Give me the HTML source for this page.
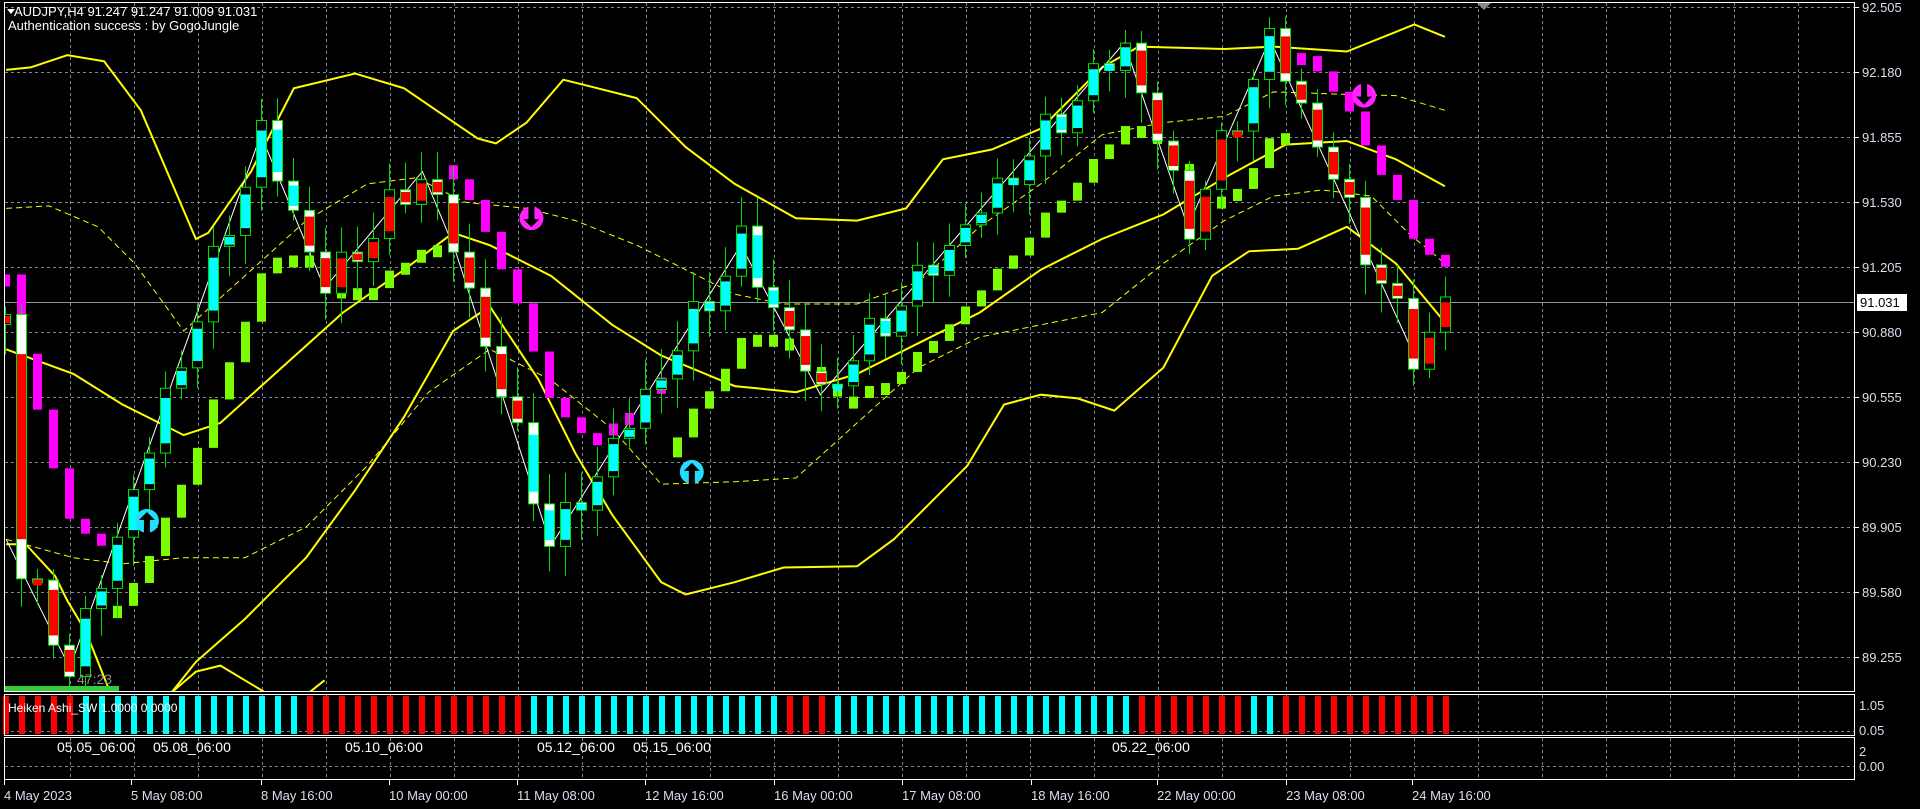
<!DOCTYPE html>
<html><head><meta charset="utf-8">
<style>
html,body{margin:0;padding:0;background:#000;overflow:hidden}
svg{display:block}
text{font-family:"Liberation Sans",sans-serif}
</style></head>
<body>
<svg id="s" width="1920" height="809" viewBox="0 0 1920 809" xmlns="http://www.w3.org/2000/svg">
<defs><clipPath id="mp"><rect x="5" y="3" width="1849" height="688"/></clipPath></defs>
<rect width="1920" height="809" fill="#000"/>
<g id="grid"></g>
<g id="bands" fill="none" clip-path="url(#mp)"></g>
<g id="cand" clip-path="url(#mp)"></g>
<g id="ind"></g>
<g id="ov"></g>
<rect x="4.5" y="2.5" width="1850" height="689" fill="none" stroke="#fff" stroke-width="1"/>
<rect x="4.5" y="694.5" width="1850" height="41" fill="none" stroke="#fff" stroke-width="1"/>
<rect x="4.5" y="737.5" width="1850" height="42" fill="none" stroke="#fff" stroke-width="1"/>
<g id="lbl" fill="#dde" font-size="13"></g>
<text x="14" y="16" fill="#fff" font-size="13">AUDJPY,H4  91.247 91.247 91.009 91.031</text>
<polygon points="7,9 15,9 11,14" fill="#fff"/>
<text x="8" y="30" fill="#fff" font-size="13">Authentication success : by GogoJungle</text>
<polygon points="1477,3 1491,3 1484,10" fill="#888"/>
<rect x="5" y="686" width="114" height="5" fill="#33cc33"/>
<text x="77" y="684" fill="#8c8c96" font-size="14">47:23</text>
<text x="8" y="712" fill="#fff" font-size="12">Heiken Ashi_SW 1.0000 0.0000</text>
</svg>
<script>
(function(){
var NS="http://www.w3.org/2000/svg";
function el(p,t,a){var e=document.createElementNS(NS,t);for(var k in a)e.setAttribute(k,a[k]);p.appendChild(e);return e;}
var G=document.getElementById('grid'),B=document.getElementById('bands'),C=document.getElementById('cand'),I=document.getElementById('ind'),O=document.getElementById('ov'),L=document.getElementById('lbl');
var gc="#7d8590";
for(var x=70;x<1855;x+=64){
 el(G,'line',{x1:x+.5,y1:3,x2:x+.5,y2:691,stroke:gc,'stroke-dasharray':'3,3'});
 el(G,'line',{x1:x+.5,y1:695,x2:x+.5,y2:735,stroke:gc,'stroke-dasharray':'3,3'});
 el(G,'line',{x1:x+.5,y1:738,x2:x+.5,y2:779,stroke:gc,'stroke-dasharray':'3,3'});
}
var prices=["92.505","92.180","91.855","91.530","91.205","90.880","90.555","90.230","89.905","89.580","89.255"];
for(var k=0;k<11;k++){var y=7+65*k;
 el(G,'line',{x1:5,y1:y+.5,x2:1854,y2:y+.5,stroke:gc,'stroke-dasharray':'3,3'});
 var t=el(L,'text',{x:1862,y:y+5});t.textContent=prices[k];
 el(L,'line',{x1:1855,y1:y+.5,x2:1859,y2:y+.5,stroke:'#fff'});}
el(G,'line',{x1:5,y1:731.5,x2:1854,y2:731.5,stroke:gc,'stroke-dasharray':'3,3'});
el(G,'line',{x1:5,y1:766.5,x2:1854,y2:766.5,stroke:gc,'stroke-dasharray':'3,3'});
el(G,'line',{x1:5,y1:302.5,x2:1854,y2:302.5,stroke:'#8a95a0'});
el(L,'rect',{x:1857,y:294,width:50,height:17,fill:'#fff'});
var t=el(L,'text',{x:1860,y:307,fill:'#000'});t.textContent="91.031";
[["1.05",710],["0.05",735],["2",756],["0.00",771]].forEach(function(a){var t=el(L,'text',{x:1859,y:a[1]});t.textContent=a[0];});
var tl=[["4 May 2023",4],["5 May 08:00",131],["8 May 16:00",261],["10 May 00:00",389],["11 May 08:00",517],["12 May 16:00",645],["16 May 00:00",774],["17 May 08:00",902],["18 May 16:00",1031],["22 May 00:00",1157],["23 May 08:00",1286],["24 May 16:00",1412]];
tl.forEach(function(a){var t=el(L,'text',{x:a[1],y:800});t.textContent=a[0];el(L,'line',{x1:a[1]+0.5,y1:780,x2:a[1]+0.5,y2:785,stroke:'#fff'});});
var dl=[["05.05_06:00",57],["05.08_06:00",153],["05.10_06:00",345],["05.12_06:00",537],["05.15_06:00",633],["05.22_06:00",1112]];
dl.forEach(function(a){var t=el(L,'text',{x:a[1],y:752,fill:'#fff',"font-size":"14"});t.textContent=a[0];});
var SX=1920/1568,SY=809/660;
function pl(pts,col,w,dash){var s=pts.map(function(p){return (p[0]*SX).toFixed(1)+","+(p[1]*SY).toFixed(1)}).join(" ");var a={points:s,stroke:col,'stroke-width':w,fill:'none'};if(dash)a['stroke-dasharray']=dash;el(B,'polyline',a);}
pl([[5,57],[25,55],[55,45],[85,50],[115,90],[160,195],[170,190],[205,140],[240,72],[290,60],[330,72],[390,113],[405,117],[430,100],[460,65],[480,70],[520,80],[560,120],[600,150],[650,178],[700,180],[740,170],[770,130],[810,122],[850,105],[900,55],[930,38],[1000,40],[1040,38],[1100,42],[1155,20],[1180,30]],'#ffff00',2);
pl([[5,285],[60,305],[100,330],[150,355],[180,345],[230,300],[280,255],[330,220],[370,190],[400,200],[450,225],[500,265],[540,290],[600,315],[650,320],[700,305],[750,280],[800,255],[850,220],[900,195],[950,175],[1000,145],[1050,118],[1100,115],[1140,130],[1180,152]],'#ffff00',2);
pl([[120,660],[140,565],[160,540],[200,505],[250,455],[290,400],[330,340],[370,270],[400,250],[440,310],[470,370],[500,420],[540,475],[560,485],[600,475],[640,463],[700,462],[730,440],[760,410],[790,380],[820,330],[850,322],[880,325],[910,335],[950,300],[990,225],[1020,205],[1060,203],[1100,185],[1140,215],[1180,263]],'#ffff00',2);
pl([[5,444],[21,444],[45,470],[55,490],[70,515],[80,540],[90,565]],'#ffff00',2);
pl([[140,565],[160,548],[180,543],[200,555],[220,567],[250,567],[265,555]],'#ffff00',2);
pl([[5,170],[40,168],[80,185],[110,215],[150,270],[200,225],[250,180],[300,150],[340,145],[380,165],[430,170],[470,180],[520,200],[560,220],[600,240],[640,248],[700,248],[750,230],[800,185],[850,150],[900,110],[950,100],[1000,95],[1040,75],[1100,77],[1140,78],[1180,90]],'#ffff00',1,'6,4');
pl([[5,440],[60,455],[100,460],[150,455],[200,455],[250,430],[300,380],[350,320],[400,285],[450,310],[500,350],[540,395],[600,393],[650,390],[700,345],[750,300],[800,275],[850,265],[900,255],[950,215],[1000,180],[1040,160],[1080,155],[1120,160],[1150,190],[1180,215]],'#ffff00',1,'6,4');
var piv=[[5,440],[57,545],[213,110],[265,235],[345,140],[372,205],[450,445],[605,200],[670,322],[918,35],[970,185],[1037,32],[1155,290],[1180,250]];
pl(piv.slice(0,13),'#ffffff',1);
var N=91;function cx(i){return 5+16*i;}
var py=piv.map(function(p){return [(p[0]*SX-5)/16,p[1]*SY];});
function interp(i){for(var k=0;k<py.length-1;k++){if(i>=py[k][0]&&i<=py[k+1][0]){var f=(i-py[k][0])/(py[k+1][0]-py[k][0]);return py[k][1]+f*(py[k+1][1]-py[k][1]);}}return py[py.length-1][1];}
var cl=[];for(var i=0;i<N;i++){cl.push(interp(i)+Math.sin(i*2.3)*14+Math.cos(i*1.7)*8);}
function ha(i){if(i<=4)return 'r';if(i<=18)return 'c';if(i<=32)return 'r';if(i<=48)return 'c';if(i<=51)return 'r';if(i<=70)return 'c';if(i<=77)return 'r';if(i<=79)return 'c';return 'r';}
function sm(i){if(i<=6)return 'm';if(i<=27)return 'l';if(i<=41)return 'm';if(i<=80)return 'l';return 'm';}
var ema=[cl[0]];for(var i=1;i<N;i++)ema.push(ema[i-1]+(cl[i]-ema[i-1])*0.3);
for(var i=0;i<N;i++){
 var x=cx(i),o=i?cl[i-1]:cl[0]+10,c=cl[i];
 var bt=Math.min(o,c),bb=Math.max(o,c);if(bb-bt<4){bb=bt+4;}
 var hi=bt-8-Math.abs(Math.sin(i*3.1))*22,lo=bb+8+Math.abs(Math.cos(i*2.7))*22;
 var s0=ema[i],s1=i?ema[i-1]:ema[0];var off=sm(i)=='l'?40:-40;
 var st=Math.min(s0,s1)+off,sb=Math.max(s0,s1)+off;if(sb-st<12){sb=st+12;}
 el(C,'rect',{x:x-4,y:st,width:9,height:sb-st,fill:sm(i)=='l'?'#7cfc00':'#ff00ff'});
 el(C,'line',{x1:x+.5,y1:hi,x2:x+.5,y2:lo,stroke:'#00e000'});
 el(C,'rect',{x:x-4.5,y:bt,width:10,height:bb-bt,fill:c<o?'#000':'#fff',stroke:'#00e000'});
 var hc=ha(i)=='c'?'#00ffff':'#ff0000';
 var ht=bt+(bb-bt)*0.15,hb=bb-(bb-bt)*0.15;if(hb-ht<6)hb=ht+6;
 el(C,'rect',{x:x-4,y:ht,width:9,height:hb-ht,fill:hc});
 el(I,'rect',{x:x-2,y:696,width:6,height:38,fill:hc});
}
function arrow(x,y,col,down){x*=SX;y*=SY;el(O,'circle',{cx:x,cy:y,r:12,fill:col});
 if(down)el(O,'polygon',{points:(x-3)+","+(y-12)+" "+(x+3)+","+(y-12)+" "+(x+3)+","+(y+1)+" "+(x+8)+","+(y+1)+" "+x+","+(y+9)+" "+(x-8)+","+(y+1)+" "+(x-3)+","+(y+1),fill:'#000'});
 else el(O,'polygon',{points:(x-3)+","+(y+12)+" "+(x+3)+","+(y+12)+" "+(x+3)+","+(y-1)+" "+(x+8)+","+(y-1)+" "+x+","+(y-9)+" "+(x-8)+","+(y-1)+" "+(x-3)+","+(y-1),fill:'#000'});}
arrow(434,178,'#ff22ff',true);arrow(1114,78,'#ff22ff',true);arrow(120,425,'#22ddff',false);arrow(565,385,'#22ddff',false);
})();
</script>
</body></html>
